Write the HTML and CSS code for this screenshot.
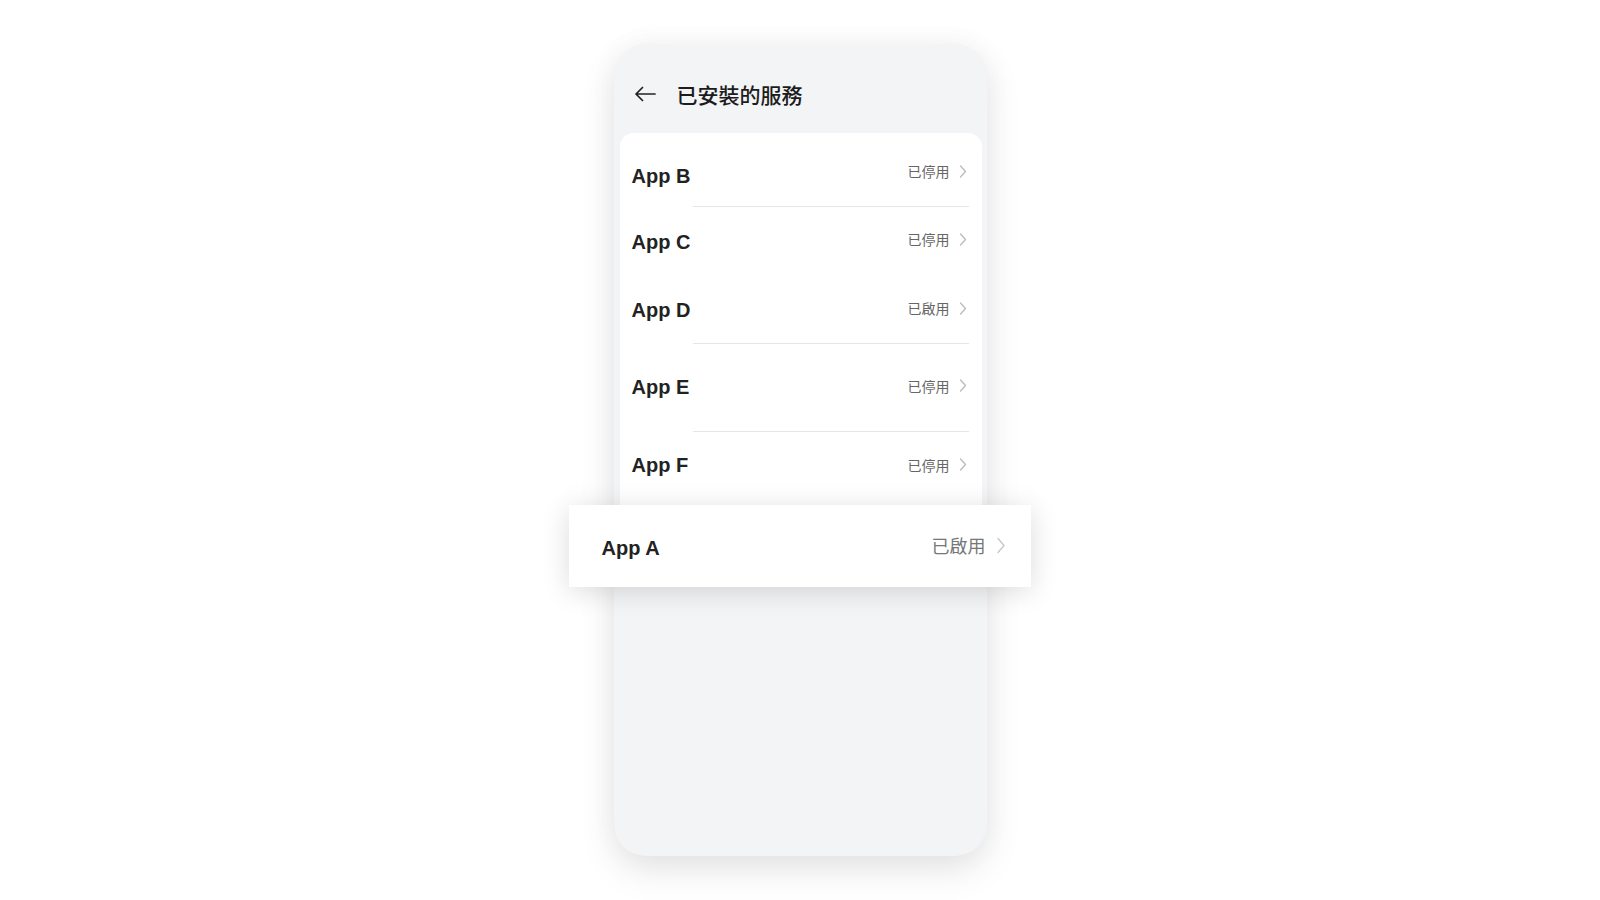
FILE: index.html
```html
<!DOCTYPE html>
<html lang="zh-Hant">
<head>
  <meta charset="UTF-8" />
  <meta name="viewport" content="width=device-width, initial-scale=1.0"/>
  <title>已安裝的服務</title>
  <link rel="stylesheet" href="styles.css">
</head>
<body>
  <div class="phone">
    <div class="header">
      <svg class="back" width="22" height="16" viewBox="0 0 22 16">
        <path d="M21 8H2M8.5 1.5L2 8l6.5 6.5" fill="none" stroke="#222" stroke-width="1.7" stroke-linecap="round" stroke-linejoin="round"/>
      </svg>
      <h1>已安裝的服務</h1>
    </div>

    <div class="card">
      <div class="row row-b">
        <span class="name">App B</span>
        <span class="status">已停用<svg class="chev" width="8" height="13" viewBox="0 0 8 13"><path d="M1.5 1l5 5.5-5 5.5" fill="none" stroke="#bbb" stroke-width="1.3" stroke-linecap="round" stroke-linejoin="round"/></svg></span>
      </div>
      <div class="divider"></div>
      <div class="row row-c">
        <span class="name">App C</span>
        <span class="status">已停用<svg class="chev" width="8" height="13" viewBox="0 0 8 13"><path d="M1.5 1l5 5.5-5 5.5" fill="none" stroke="#bbb" stroke-width="1.3" stroke-linecap="round" stroke-linejoin="round"/></svg></span>
      </div>
      <div class="row row-d">
        <span class="name">App D</span>
        <span class="status">已啟用<svg class="chev" width="8" height="13" viewBox="0 0 8 13"><path d="M1.5 1l5 5.5-5 5.5" fill="none" stroke="#bbb" stroke-width="1.3" stroke-linecap="round" stroke-linejoin="round"/></svg></span>
      </div>
      <div class="divider"></div>
      <div class="row row-e">
        <span class="name">App E</span>
        <span class="status">已停用<svg class="chev" width="8" height="13" viewBox="0 0 8 13"><path d="M1.5 1l5 5.5-5 5.5" fill="none" stroke="#bbb" stroke-width="1.3" stroke-linecap="round" stroke-linejoin="round"/></svg></span>
      </div>
      <div class="divider"></div>
      <div class="row row-f">
        <span class="name">App F</span>
        <span class="status">已停用<svg class="chev" width="8" height="13" viewBox="0 0 8 13"><path d="M1.5 1l5 5.5-5 5.5" fill="none" stroke="#bbb" stroke-width="1.3" stroke-linecap="round" stroke-linejoin="round"/></svg></span>
      </div>
    </div>

    <div class="lifted">
      <span class="name">App A</span>
      <span class="status big">已啟用<svg class="chev" width="10" height="17" viewBox="0 0 10 17"><path d="M2 1.5l6 7-6 7" fill="none" stroke="#c8c8c8" stroke-width="1.4" stroke-linecap="round" stroke-linejoin="round"/></svg></span>
    </div>
  </div>
</body>
</html>
```

FILE: styles.css
```css
body { margin: 0; min-height: 100vh; box-sizing: border-box; background: #fff; display: flex; justify-content: center; align-items: flex-start; padding-top: 44px; font-family: "Liberation Sans", "Noto Sans CJK TC", sans-serif; }
.phone { position: relative; width: 373px; height: 812px; background: #f3f4f6; border-radius: 32px; box-shadow: 0 14px 36px rgba(0,0,0,0.1), 0 0 30px rgba(0,0,0,0.04); }

.header { height: 89px; box-sizing: border-box; padding: 10px 0 0 20px; display: flex; align-items: center; }
.back { flex: none; margin-right: 21px; }
h1 { margin: 0; font-family: "Noto Sans CJK TC", sans-serif; font-size: 21px; font-weight: 500; color: #1c1c1c; }

.card { margin: 0 5px 0 6px; background: #fff; border-radius: 14px 14px 0 0; padding: 13px 0 30px; }
.row { display: flex; align-items: center; justify-content: space-between; padding: 0 15px 0 12px; }
.row-b { height: 60px; }
.row-c { height: 70px; }
.row-d { height: 66px; }
.row-e { height: 87px; }
.row-f { height: 66px; }
.divider { height: 1px; background: #e6e6e6; margin: 0 13px 0 73px; }

.name { font-size: 20px; font-weight: bold; color: #222; }
.status { display: flex; align-items: center; margin-top: -4px; font-family: "Noto Sans CJK TC", sans-serif; font-size: 14px; color: #666; }
.row-b .status { margin-top: -10px; }
.row-c .status { margin-top: -6px; }
.row-f .status { margin-top: -1px; }
.chev { margin-left: 9px; }

.lifted { position: absolute; top: 461px; left: -45px; width: 462px; height: 82px; box-sizing: border-box; padding: 4px 25px 0 33px; background: #fff; display: flex; align-items: center; justify-content: space-between; box-shadow: 0 4px 28px rgba(0,0,0,0.14); }
.status.big { font-size: 18px; color: #777; margin-top: -6px; }
.status.big .chev { margin-left: 10px; }
```
